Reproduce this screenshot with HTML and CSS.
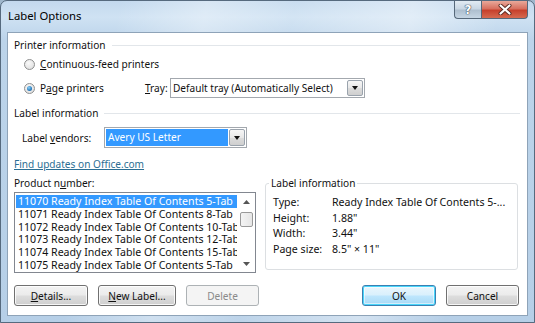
FILE: index.html
```html
<!DOCTYPE html>
<html>
<head>
<meta charset="utf-8">
<link rel="stylesheet" href="styles.css">
</head>
<body>
<div class="window">
  <div class="titlebar">
    <span class="title">Label Options</span>
    <div class="caption">
      <div class="cbtn help"><span>?</span></div>
      <div class="cbtn close">
        <svg width="14" height="11" viewBox="0 0 14 11"><path d="M2.5 1.5 L11.5 9.5 M11.5 1.5 L2.5 9.5" stroke="#5a2a22" stroke-width="4" stroke-linecap="round"/><path d="M2.5 1.5 L11.5 9.5 M11.5 1.5 L2.5 9.5" stroke="#fff" stroke-width="2.2" stroke-linecap="round"/></svg>
      </div>
    </div>
  </div>
  <div class="client">
    <div class="group-hdr first"><span>Printer information</span></div>
    <div class="radio-row first">
      <span class="radio"></span><span class="rtext"><u>C</u>ontinuous-feed printers</span>
    </div>
    <div class="radio-row second">
      <span class="radio checked"></span><span class="rtext page">P<u>a</u>ge printers</span>
      <span class="tray-lbl"><u>T</u>ray:</span>
      <div class="select tray"><span class="sel-text">Default tray (Automatically Select)</span><span class="ddbtn"></span></div>
    </div>
    <div class="group-hdr second"><span>Label information</span></div>
    <div class="vendor-row">
      <span class="vendor-lbl">Label <u>v</u>endors:</span>
      <div class="select vendor"><span class="sel-text hl">Avery US Letter</span><span class="ddbtn"></span></div>
    </div>
    <a class="link">Find updates on Office.com</a>
    <div class="product">
      <div class="prod-left">
        <div class="prod-lbl">Product n<u>u</u>mber:</div>
        <div class="listbox">
          <div class="items">
            <div class="item sel">11070 Ready Index Table Of Contents 5-Tab</div>
            <div class="item">11071 Ready Index Table Of Contents 8-Tab</div>
            <div class="item">11072 Ready Index Table Of Contents 10-Tab</div>
            <div class="item">11073 Ready Index Table Of Contents 12-Tab</div>
            <div class="item">11074 Ready Index Table Of Contents 15-Tab</div>
            <div class="item">11075 Ready Index Table Of Contents 5-Tab</div>
          </div>
          <div class="vscroll">
            <div class="sarrow up"><svg width="7" height="4" viewBox="0 0 7 4"><path d="M0 4 L3.5 0 L7 4 Z" fill="#555"/></svg></div>
            <div class="strack"><div class="thumb"></div></div>
            <div class="sarrow down"><svg width="7" height="4" viewBox="0 0 7 4"><path d="M0 0 L3.5 4 L7 0 Z" fill="#555"/></svg></div>
          </div>
        </div>
      </div>
      <fieldset class="info">
        <legend>Label information</legend>
        <div class="info-grid">
          <span>Type:</span><span>Ready Index Table Of Contents 5-...</span>
          <span>Height:</span><span>1.88"</span>
          <span>Width:</span><span>3.44"</span>
          <span>Page size:</span><span>8.5" × 11"</span>
        </div>
      </fieldset>
    </div>
    <div class="buttons">
      <div class="btn-group">
        <div class="btn w-details"><u>D</u>etails...</div>
        <div class="btn w-new"><u>N</u>ew Label...</div>
        <div class="btn w-delete disabled">Delete</div>
      </div>
      <div class="btn-group">
        <div class="btn w-ok default">OK</div>
        <div class="btn w-cancel">Cancel</div>
      </div>
    </div>
  </div>
</div>
</body>
</html>
```

FILE: styles.css
```css
html, body {
  margin: 0;
  padding: 0;
}
body {
  width: 535px;
  height: 323px;
  overflow: hidden;
  font-family: "Noto Sans", "Open Sans", sans-serif;
  font-size: 10.1px;
  color: #111;
  background: #9fb7cc;
}
.window {
  width: 535px;
  height: 323px;
  box-sizing: border-box;
  border: 1px solid #566a7e;
  border-radius: 7px 7px 0 0;
  background:
    linear-gradient(100deg, rgba(255,255,255,0) 20%, rgba(255,255,255,0.35) 35%, rgba(255,255,255,0.1) 50%, rgba(255,255,255,0.4) 70%, rgba(255,255,255,0) 85%),
    linear-gradient(to bottom, #c3d9ee 0%, #cfe2f3 5%, #bcd4ea 12%, #b6cfe7 100%);
  display: flex;
  flex-direction: column;
}
.titlebar {
  height: 31px;
  flex: none;
  display: flex;
  justify-content: space-between;
  align-items: flex-start;
}
.title {
  padding-left: 7px;
  margin-top: 7px;
  font-size: 11.3px;
  line-height: 16px;
  color: #000;
}
.caption {
  display: flex;
  margin-right: 6px;
}
.cbtn {
  height: 18px;
  box-sizing: border-box;
  border: 1px solid #56687a;
  border-top: none;
  display: flex;
  align-items: center;
  justify-content: center;
}
.help {
  width: 27px;
  border-radius: 0 0 0 4px;
  border-right: none;
  background: linear-gradient(to bottom, #e2ebf3 0%, #c9d7e4 45%, #aebfcf 55%, #c6d6e4 100%);
}
.help span {
  font-family: "DejaVu Sans", sans-serif;
  font-weight: bold;
  font-size: 12px;
  line-height: 12px;
  color: #fff;
  text-shadow: 0 0 1px #3b4c5e, 0 0 1px #3b4c5e, 0 0 1px #3b4c5e;
}
.close {
  width: 47px;
  border-radius: 0 0 4px 0;
  background: linear-gradient(to bottom, #e9a99a 0%, #d7705f 45%, #c7412c 55%, #d66a50 100%);
}
.client {
  flex: 1;
  margin: 0 6px 6px 6px;
  background: #fff;
  border: 1px solid #8ea3b8;
  padding: 0 7px 0 6px;
  display: flex;
  flex-direction: column;
}
.group-hdr {
  height: 14px;
  line-height: 14px;
  display: flex;
  align-items: center;
}
.group-hdr.first {
  margin-top: 5px;
}
.group-hdr.second {
  margin-top: 8px;
}
.group-hdr::after {
  content: "";
  flex: 1;
  margin-left: 6px;
  border-top: 1px solid #e2e6ea;
}
.radio-row {
  display: flex;
  align-items: center;
}
.radio-row.first {
  margin-top: 3px;
  height: 18px;
}
.radio-row.second {
  margin-top: 5px;
  height: 20px;
}
.radio {
  width: 11px;
  height: 11px;
  box-sizing: border-box;
  border-radius: 50%;
  border: 1px solid #8e8f8f;
  background: radial-gradient(circle at 40% 35%, #fafafa 0%, #e3e3e3 70%, #d6d6d6 100%);
  margin-left: 10px;
  margin-right: 5px;
  display: flex;
  align-items: center;
  justify-content: center;
}
.radio.checked::after {
  content: "";
  width: 5px;
  height: 5px;
  border-radius: 50%;
  background: radial-gradient(circle at 40% 35%, #8fd0f5 0%, #2a7ec0 60%, #154f86 100%);
}
.rtext.page {
  width: 105px;
}
.tray-lbl {
  width: 25px;
}
.select {
  box-sizing: border-box;
  border: 1px solid #a3a8ae;
  background: #fff;
  display: flex;
  align-items: center;
  padding: 1px;
}
.select.tray {
  width: 195px;
  height: 20px;
}
.sel-text {
  flex: 1;
  padding-left: 1px;
  line-height: 16px;
  align-self: stretch;
  white-space: nowrap;
  overflow: hidden;
}
.sel-text.hl {
  background: #3399ff;
  color: #fff;
  padding-left: 2px;
  margin-right: 1px;
}
.ddbtn {
  width: 16px;
  align-self: stretch;
  box-sizing: border-box;
  border: 1px solid #9aa3ad;
  border-radius: 2px;
  background: linear-gradient(to bottom, #f6f6f6 0%, #e8e8e8 50%, #dcdcdc 51%, #cfcfcf 100%);
  display: flex;
  align-items: center;
  justify-content: center;
}
.ddbtn::after {
  content: "";
  width: 0;
  height: 0;
  border-left: 3.5px solid transparent;
  border-right: 3.5px solid transparent;
  border-top: 4px solid #111;
}
.vendor-row {
  margin-top: 7px;
  height: 21px;
  display: flex;
  align-items: center;
}
.vendor-lbl {
  padding-left: 8px;
  width: 82px;
}
.select.vendor {
  width: 143px;
  height: 21px;
}
.link {
  margin-top: 9px;
  height: 14px;
  line-height: 14px;
  color: #2b6e93;
  text-decoration: underline;
  align-self: flex-start;
}
.product {
  margin-top: 5px;
  display: flex;
  gap: 9px;
}
.prod-left {
  width: 242px;
  display: flex;
  flex-direction: column;
}
.prod-lbl {
  height: 14px;
  line-height: 14px;
}
.listbox {
  margin-top: 2px;
  height: 81px;
  box-sizing: border-box;
  border: 1px solid #828790;
  display: flex;
}
.items {
  flex: 1;
  overflow: hidden;
  padding: 2px 1px 0 1px;
}
.item {
  height: 12.8px;
  line-height: 12.8px;
  padding-left: 2px;
  white-space: nowrap;
  overflow: hidden;
  font-size: 10.6px;
}
.item.sel {
  background: #3399ff;
  color: #fff;
}
.vscroll {
  width: 17px;
  display: flex;
  flex-direction: column;
  background: #fff;
}
.sarrow {
  height: 17px;
  display: flex;
  align-items: center;
  justify-content: center;
}
.strack {
  flex: 1;
  padding-top: 2px;
  display: flex;
  justify-content: center;
}
.thumb {
  width: 13px;
  height: 15px;
  box-sizing: border-box;
  border: 1px solid #9a9a9a;
  border-radius: 2px;
  background: linear-gradient(to right, #f4f4f4, #e6e6e6);
}
.info {
  margin: 0;
  width: 253px;
  height: 94px;
  box-sizing: border-box;
  border: 1px solid #dcdfe2;
  border-radius: 3px;
  padding: 5px 7px 0 7px;
  min-width: 0;
}
.info legend {
  padding: 0 2px;
  margin-left: -4px;
  line-height: 14px;
}
.info-grid {
  display: grid;
  grid-template-columns: 59px 1fr;
  grid-auto-rows: 15.5px;
  line-height: 15.5px;
  white-space: nowrap;
  font-size: 10.6px;
}
.buttons {
  margin-top: 12px;
  display: flex;
  justify-content: space-between;
  padding-right: 1px;
}
.btn-group {
  display: flex;
  gap: 10px;
}
.btn {
  height: 21px;
  box-sizing: border-box;
  border: 1px solid #707070;
  border-radius: 3px;
  background: linear-gradient(to bottom, #f3f3f3 0%, #ebebeb 48%, #dddddd 52%, #cfcfcf 100%);
  box-shadow: inset 0 0 0 1px rgba(255,255,255,0.8);
  display: flex;
  align-items: center;
  justify-content: center;
  color: #111;
}
.btn.default {
  border-color: #3c7fb1;
  box-shadow: inset 0 0 0 1px #48d6fb, inset 0 0 0 2px rgba(255,255,255,0.5);
  background: linear-gradient(to bottom, #eaf6fd 0%, #d9f0fc 48%, #bee6fd 52%, #a7d9f5 100%);
}
.btn.disabled {
  border-color: #adb2b5;
  background: #f4f4f4;
  box-shadow: none;
  color: #8a8a8a;
}
.w-details { width: 74px; }
.w-new { width: 78px; }
.w-delete { width: 73px; }
.w-ok { width: 74px; }
.w-cancel { width: 73px; }
```
